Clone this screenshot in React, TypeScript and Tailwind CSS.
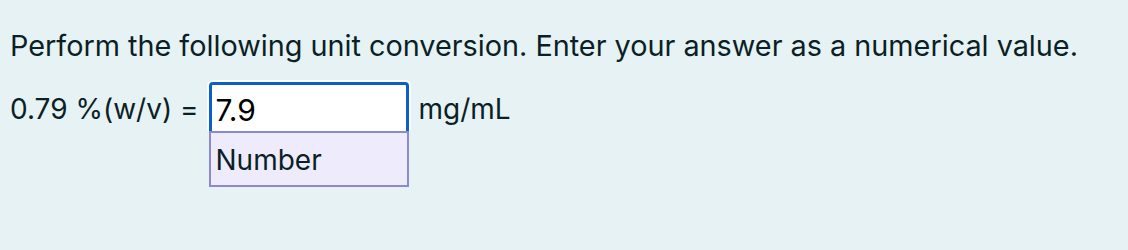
import { useState } from "react";

const font = { fontFamily: "Inter, 'Noto Sans', sans-serif" };

export default function App() {
  const [value, setValue] = useState("7.9");

  return (
    <div
      className="w-[1128px] h-[250px] bg-[#e7f2f4] text-[#0b1f26] px-[10px] pt-[26px]"
      style={font}
    >
      <p className="text-[28.8px] leading-[40px]">
        Perform the following unit conversion. Enter your answer as a numerical value.
      </p>
      <div className="mt-[16px] flex items-start text-[28px]">
        <span className="leading-[50px] pt-[2px] mr-[10px]">0.79 %(w/v) =</span>
        <div className="relative">
          <div className="rounded-[4px] ring-2 ring-white">
            <input
              value={value}
              onChange={(e) => setValue(e.target.value)}
              className="block w-[200px] h-[50px] bg-white text-black text-[30px] pl-[4px] pt-[2px] border-[3px] border-b-0 border-[#0a5fcc] rounded-t-[4px] outline-none"
              style={font}
            />
          </div>
          <div className="absolute left-0 top-[49px] w-[200px] h-[56px] bg-[#eeecfc] border-2 border-[#8c89cf] px-[5px] pt-[2px] flex items-center text-[28px]">
            Number
          </div>
        </div>
        <span className="leading-[50px] pt-[2px] ml-[10px]">mg/mL</span>
      </div>
    </div>
  );
}
